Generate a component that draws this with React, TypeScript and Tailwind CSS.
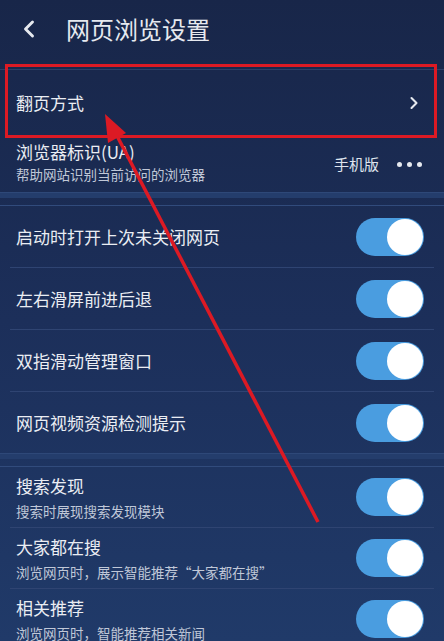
import { ChevronLeft, ChevronRight } from "lucide-react";

const FONT = { fontFamily: '"Noto Sans CJK SC", "Noto Sans", sans-serif' };

function Toggle() {
  return (
    <div className="w-[68px] h-[38px] rounded-full bg-[#4a9de0] flex items-center justify-end p-[1px] shrink-0">
      <div className="w-[36px] h-[36px] rounded-full bg-white" />
    </div>
  );
}

function Divider() {
  return <div className="mx-[10px] h-px bg-[#2f4472]" />;
}

function GroupGap() {
  return (
    <div className="h-[14px] flex flex-col">
      <div className="h-[6px] bg-[#243d6c] border-t border-[#2e4878]" />
      <div className="flex-1" />
      <div className="h-px bg-[#314b7c]" />
    </div>
  );
}

function ToggleRow({ title, sub }: { title: string; sub?: string }) {
  return (
    <div className={`${sub ? "h-[60px]" : "h-[61px]"} flex items-center justify-between pl-4 pr-5`}>
      <div className="flex flex-col">
        <span className="text-[17px] leading-[24px] text-[#eaedf3]">{title}</span>
        {sub && <span className="text-[13.5px] leading-[20px] mt-[3px] text-[#c0c8d8]">{sub}</span>}
      </div>
      <Toggle />
    </div>
  );
}

export default function App() {
  return (
    <div className="relative w-[444px] h-[641px] overflow-hidden bg-gradient-to-b from-[#182649] via-[#1c2f5a] to-[#203a69]" style={FONT}>
      {/* header */}
      <div className="h-[70px] flex items-center border-b border-[#2c3f68]">
        <ChevronLeft size={28} strokeWidth={2.5} className="ml-[15px] text-[#e6e9ef] -mt-3" />
        <span className="ml-[23px] text-[24px] text-[#e6e9ef] -mt-3">网页浏览设置</span>
      </div>

      <div className="h-[66px] flex items-center justify-between pl-4 pr-[20px]">
        <span className="text-[17px] text-[#eaedf3]">翻页方式</span>
        <ChevronRight size={20} strokeWidth={2.5} className="text-[#e6e9ef]" />
      </div>

      <div className="h-[56px] flex items-center justify-between pl-4 pr-[22px]">
        <div className="flex flex-col -mt-1">
          <span className="text-[17px] leading-[24px] text-[#eaedf3]">浏览器标识(UA)</span>
          <span className="text-[13.5px] leading-[20px] text-[#c0c8d8]">帮助网站识别当前访问的浏览器</span>
        </div>
        <div className="flex items-center gap-[18px]">
          <span className="text-[15px] text-[#dfe4ee]">手机版</span>
          <div className="flex gap-[5px]">
            <div className="w-[5px] h-[5px] rounded-full bg-[#e6e9ef]" />
            <div className="w-[5px] h-[5px] rounded-full bg-[#e6e9ef]" />
            <div className="w-[5px] h-[5px] rounded-full bg-[#e6e9ef]" />
          </div>
        </div>
      </div>

      <GroupGap />

      <ToggleRow title="启动时打开上次未关闭网页" />
      <Divider />
      <ToggleRow title="左右滑屏前进后退" />
      <Divider />
      <ToggleRow title="双指滑动管理窗口" />
      <Divider />
      <ToggleRow title="网页视频资源检测提示" />

      <GroupGap />

      <ToggleRow title="搜索发现" sub="搜索时展现搜索发现模块" />
      <Divider />
      <ToggleRow title="大家都在搜" sub="浏览网页时，展示智能推荐“大家都在搜”" />
      <Divider />
      <ToggleRow title="相关推荐" sub="浏览网页时，智能推荐相关新闻" />

      {/* annotation overlay */}
      <div className="absolute left-[5px] top-[64px] w-[432px] h-[74px] border-[3px] border-[#dc1a24]" />
      <svg className="absolute inset-0 pointer-events-none" width="444" height="641">
        <line x1="318" y1="522" x2="115" y2="132" stroke="#dc1a24" strokeWidth="3.5" />
        <polygon points="105,114 126,133 108,143" fill="#dc1a24" />
      </svg>
    </div>
  );
}
